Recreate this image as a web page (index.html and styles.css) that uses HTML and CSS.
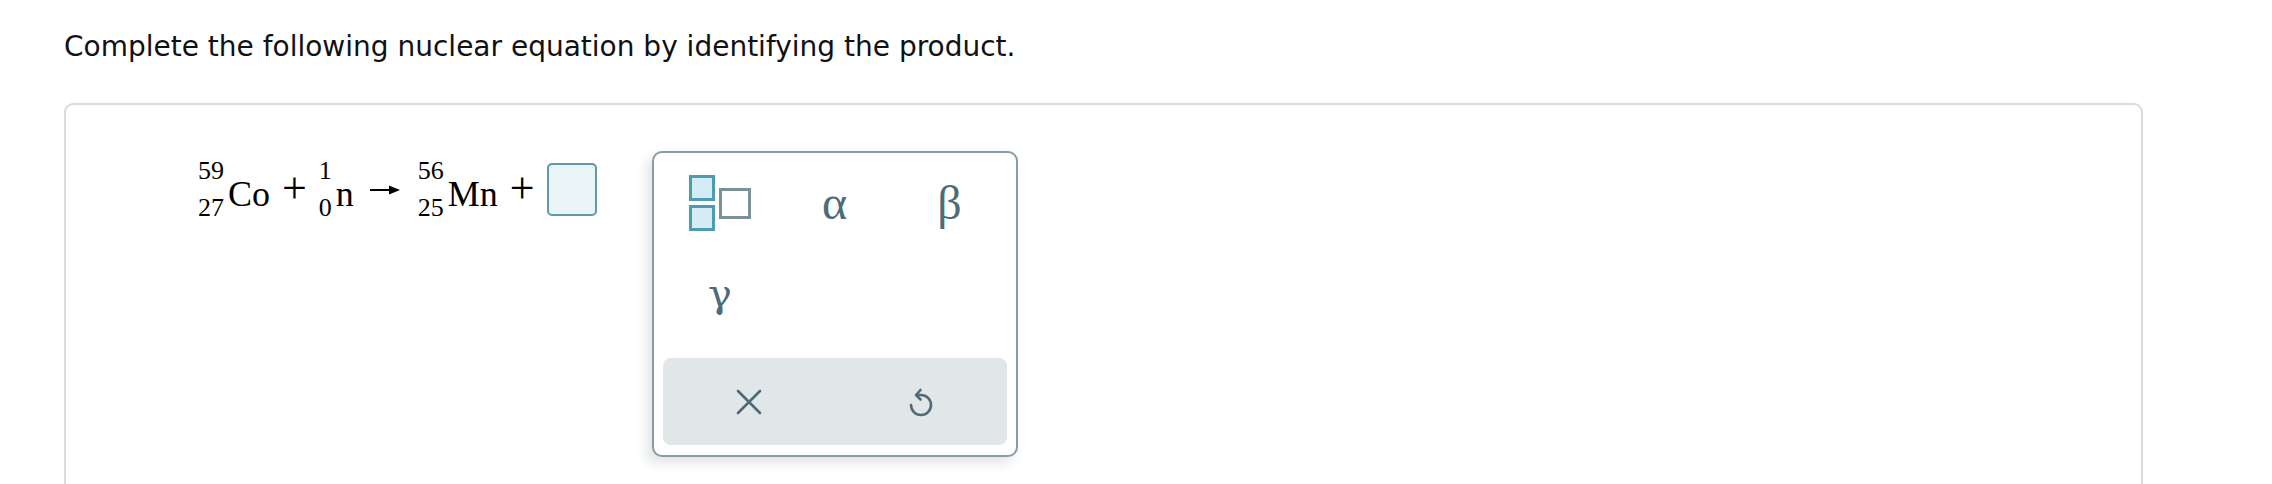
FILE: index.html
```html
<!DOCTYPE html>
<html lang="en">
<head>
<meta charset="utf-8">
<title>Nuclear equation</title>
<link rel="stylesheet" href="styles.css">
</head>
<body>
<main class="page">
  <p class="prompt">Complete the following nuclear equation by identifying the product.</p>
  <section class="answer-box">
    <div class="equation">
      <span class="nuclide">
        <span class="scripts"><span class="sup">59</span><span class="sub">27</span></span>
        <span class="sym">Co</span>
      </span>
      <span class="op">+</span>
      <span class="nuclide">
        <span class="scripts"><span class="sup center">1</span><span class="sub">0</span></span>
        <span class="sym">n</span>
      </span>
      <span class="arrow">
        <svg width="30" height="12" viewBox="0 0 30 12"><line x1="0" y1="6" x2="22" y2="6" stroke="#000" stroke-width="2"/><path d="M19 1.5 L30 6 L19 10.5 Z" fill="#000"/></svg>
      </span>
      <span class="nuclide">
        <span class="scripts"><span class="sup">56</span><span class="sub">25</span></span>
        <span class="sym">Mn</span>
      </span>
      <span class="op">+</span>
      <span class="slot-wrap">
        <span class="slot"></span>
        <div class="palette">
          <div class="palette-grid">
            <button class="key" type="button" aria-label="nuclide template">
              <span class="tmpl">
                <span class="tmpl-col"><span class="sq sq-small"></span><span class="sq sq-small"></span></span>
                <span class="sq sq-big"></span>
              </span>
            </button>
            <button class="key greek" type="button">α</button>
            <button class="key greek" type="button">β</button>
            <button class="key greek gamma" type="button">γ</button>
          </div>
          <div class="palette-actions">
            <button class="action" type="button" aria-label="clear">
              <svg width="26" height="26" viewBox="0 0 26 26"><path d="M2 2 L24 24 M24 2 L2 24" stroke="#4f6a75" stroke-width="2.6" stroke-linecap="round" fill="none"/></svg>
            </button>
            <button class="action" type="button" aria-label="undo">
              <svg width="28" height="32" viewBox="0 0 28 32"><path d="M10 9 H14 A10 10 0 1 1 4 19" stroke="#4f6a75" stroke-width="2.6" stroke-linecap="round" fill="none"/><path d="M13.5 4 L9 9 L13.5 13.5" stroke="#4f6a75" stroke-width="2.6" stroke-linecap="round" stroke-linejoin="round" fill="none"/></svg>
            </button>
          </div>
        </div>
      </span>
    </div>
  </section>
</main>
</body>
</html>
```
FILE: styles.css
```css
html, body {
  margin: 0;
  padding: 0;
  background: #ffffff;
}

.page {
  padding: 0 0 0 64px;
  width: 2079px;
}

.prompt {
  margin: 0;
  padding-top: 30px;
  font-family: "DejaVu Sans", Verdana, sans-serif;
  font-size: 28px;
  line-height: 33px;
  color: #111;
}

.answer-box {
  margin-top: 40px;
  height: 420px;
  border: 2px solid #d8dcdf;
  border-radius: 9px;
  background: #fff;
  padding: 53px 0 0 132px;
  box-sizing: border-box;
}

.equation {
  display: flex;
  align-items: center;
  gap: 12px;
  font-family: "Liberation Serif", "Times New Roman", serif;
  color: #000;
  height: 63px;
}

.nuclide {
  display: flex;
  align-items: flex-start;
}

.scripts {
  display: flex;
  flex-direction: column;
  font-size: 26px;
  line-height: 26px;
  gap: 11px;
  padding-right: 4px;
}

.scripts .center {
  text-align: center;
}

.sym {
  font-size: 36px;
  line-height: 36px;
  margin-top: 18px;
}

.op {
  font-size: 44px;
  line-height: 44px;
  margin-top: -2px;
}

.arrow {
  display: flex;
  align-items: center;
  padding: 0 6px 0 4px;
}

.slot-wrap {
  position: relative;
  display: flex;
}

.slot {
  display: block;
  width: 50px;
  height: 53px;
  box-sizing: border-box;
  border: 2px solid #5e98a9;
  border-radius: 5px;
  background: #e9f4f7;
}

.palette {
  position: absolute;
  left: 105px;
  top: -12px;
  width: 366px;
  height: 306px;
  box-sizing: border-box;
  border: 2px solid #8a9ca5;
  border-radius: 10px;
  background: #fff;
  box-shadow: -5px 6px 12px rgba(40, 60, 70, 0.14);
  padding: 8px 9px 10px;
  display: flex;
  flex-direction: column;
}

.palette-grid {
  display: grid;
  grid-template-columns: repeat(3, 1fr);
  grid-template-rows: 84px 96px;
}

.key {
  border: 0;
  background: transparent;
  padding: 0;
  display: flex;
  align-items: center;
  justify-content: center;
  font-family: "Liberation Serif", "Times New Roman", serif;
  font-size: 48px;
  line-height: 1;
  color: #4e6b78;
}

.gamma {
  font-family: "DejaVu Serif", "Liberation Serif", serif;
  font-size: 40px;
}

.tmpl {
  display: flex;
  align-items: center;
  gap: 4px;
}

.tmpl-col {
  display: flex;
  flex-direction: column;
  gap: 4px;
}

.sq {
  display: block;
  box-sizing: border-box;
  border: 3px solid #4f9bb0;
}

.sq-small {
  width: 26px;
  height: 26px;
  background: #d4edf4;
}

.sq-big {
  width: 32px;
  height: 31px;
  border-color: #7d9198;
  background: #fff;
}

.palette-actions {
  margin-top: auto;
  height: 87px;
  border-radius: 8px;
  background: #e1e6e9;
  display: grid;
  grid-template-columns: 1fr 1fr;
}

.action {
  border: 0;
  background: transparent;
  padding: 0;
  display: flex;
  align-items: center;
  justify-content: center;
}
```
